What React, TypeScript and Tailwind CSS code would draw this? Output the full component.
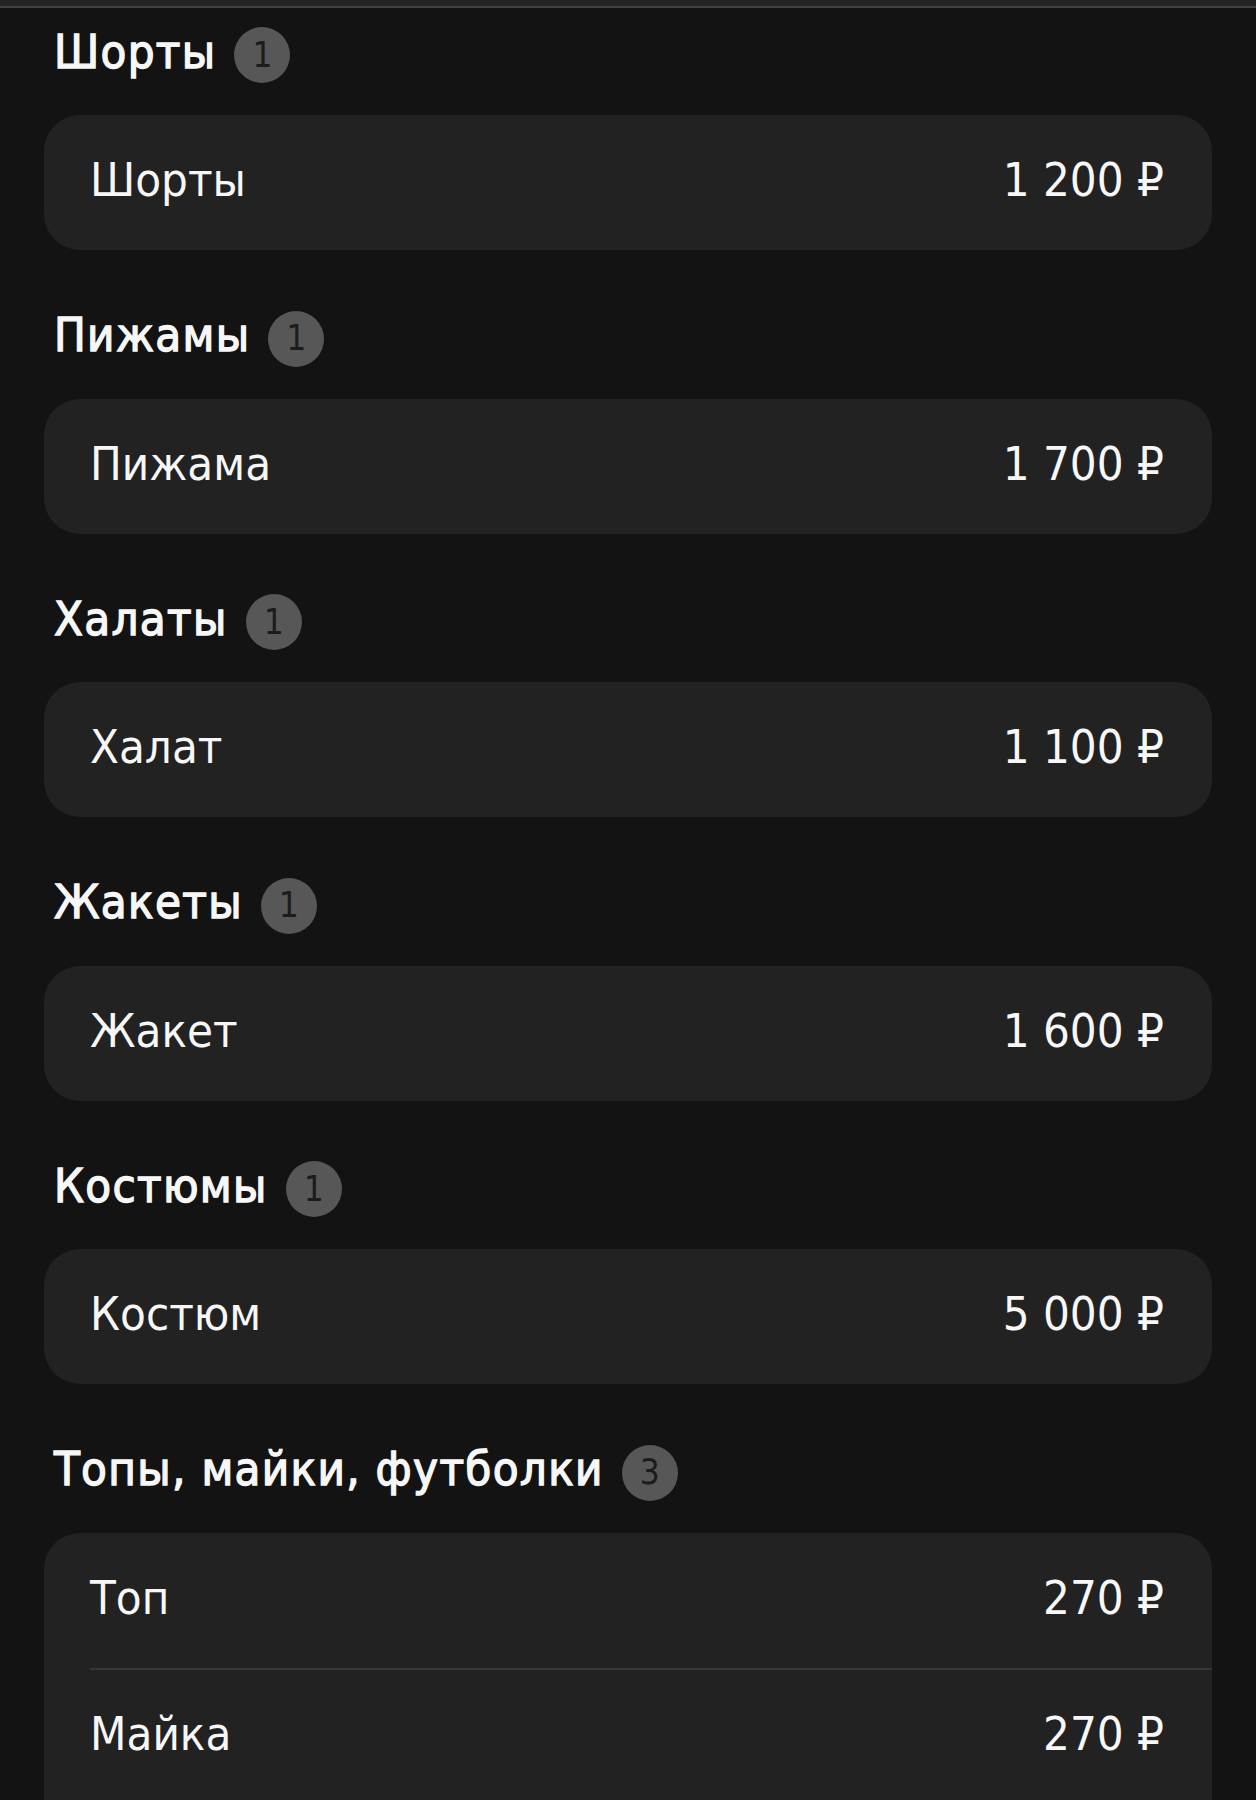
import React from "react";

type Item = { name: string; price: string };
type Section = { title: string; items: Item[] };

const sections: Section[] = [
  { title: "Шорты", items: [{ name: "Шорты", price: "1 200 ₽" }] },
  { title: "Пижамы", items: [{ name: "Пижама", price: "1 700 ₽" }] },
  { title: "Халаты", items: [{ name: "Халат", price: "1 100 ₽" }] },
  { title: "Жакеты", items: [{ name: "Жакет", price: "1 600 ₽" }] },
  { title: "Костюмы", items: [{ name: "Костюм", price: "5 000 ₽" }] },
  {
    title: "Топы, майки, футболки",
    items: [
      { name: "Топ", price: "270 ₽" },
      { name: "Майка", price: "270 ₽" },
      { name: "Футболка", price: "270 ₽" },
    ],
  },
];

const font = "[font-family:'DejaVu_Sans_Condensed','DejaVu_Sans',sans-serif] [font-stretch:condensed]";

export default function App() {
  return (
    <div className={`min-h-[1800px] bg-[#131313] text-white ${font}`}>
      <div className="h-[8px] bg-[#232323] border-b-2 border-[#424242]" />
      <div className="px-[44px] pt-[19px]">
        {sections.map((s, si) => (
          <div key={s.title} className={si === 0 ? "" : "mt-[60.5px]"}>
            <div className="flex items-center h-[56px] pl-[10px]">
              <span className="text-[47px] leading-none font-normal tracking-[1.3px] [-webkit-text-stroke:1.3px_#f7f7f7] text-[#f7f7f7] pb-[8px]">
                {s.title}
              </span>
              <span className="ml-[18px] w-[56px] h-[56px] rounded-full bg-[#575757] flex items-center justify-center text-[35px] leading-none text-[#1c1c1c]">
                {s.items.length}
              </span>
            </div>
            <div className="mt-[32px] bg-[#222222] rounded-[36px] overflow-hidden">
              {s.items.map((it, ii) => (
                <div key={it.name} className="pl-[46px]">
                  <div
                    className={`flex items-center justify-between h-[135px] pr-[48px] ${
                      ii > 0 ? "border-t-2 border-[#363636]" : ""
                    }`}
                  >
                    <span className="text-[47px] leading-none text-[#f7f7f7] pb-[6px]">{it.name}</span>
                    <span className="text-[47px] leading-none text-[#f7f7f7] pb-[6px]">{it.price}</span>
                  </div>
                </div>
              ))}
            </div>
          </div>
        ))}
      </div>
    </div>
  );
}
